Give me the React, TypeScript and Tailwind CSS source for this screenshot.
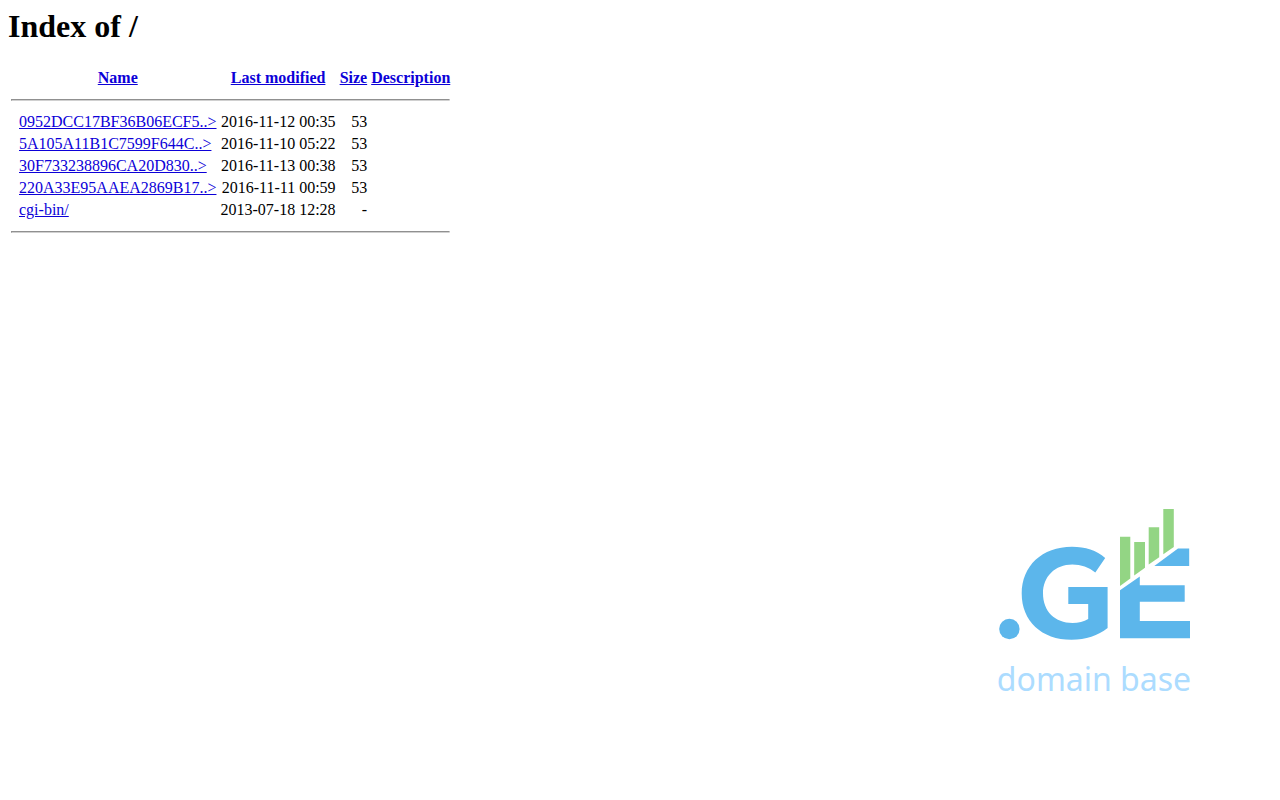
const columns = ['Name', 'Last modified', 'Size', 'Description'];

const entries = [
  { name: '0952DCC17BF36B06ECF5..>', modified: '2016-11-12 00:35', size: '53' },
  { name: '5A105A11B1C7599F644C..>', modified: '2016-11-10 05:22', size: '53' },
  { name: '30F733238896CA20D830..>', modified: '2016-11-13 00:38', size: '53' },
  { name: '220A33E95AAEA2869B17..>', modified: '2016-11-11 00:59', size: '53' },
  { name: 'cgi-bin/', modified: '2013-07-18 12:28', size: '-' },
];

function Rule() {
  return (
    <tr>
      <td colSpan={5} className="p-px">
        <hr className="my-2 h-0 border border-t-[#909090] border-r-[#eeeeee] border-b-[#d0d0d0] border-l-[#909090]" />
      </td>
    </tr>
  );
}

function Logo() {
  return (
    <div className="flex flex-col items-center">
      <svg width="196" height="132" viewBox="996 508 196 132" aria-hidden="true">
        <g fill="#5cb6eb">
          <circle cx="1009.4" cy="629" r="10.2" />
          <path d="M1105.2 558 L1095.3 572.4 C1089 567.2 1081 564.4 1072.3 564.4 C1055 564.4 1043 576.5 1043 593.3 C1043 611.5 1055 623 1072.5 623 C1078.5 623 1083.8 621.8 1088.2 619 V604 H1068.3 V587 H1107.6 V628 C1098 635.7 1086 639.8 1071.5 639.8 C1041.5 639.8 1021.7 621 1021.7 593.5 C1021.7 566 1042 546.7 1072 546.7 C1085.5 546.7 1096.5 550.3 1105.2 558 Z" />
          <path d="M1120 590.3 L1139.8 576.5 V585.3 H1184.7 V601.8 H1139.8 V621 H1190 V638.2 H1120 Z" />
          <path d="M1154.3 566 L1178 548.5 H1189.2 V566 Z" />
        </g>
        <g fill="#93d584">
          <path d="M1120 536.8 H1130.3 V578.6 L1120 586 Z" />
          <path d="M1134.2 542 H1145 V567.8 L1134.2 575.5 Z" />
          <path d="M1148.7 527.2 H1159.2 V557.3 L1148.7 564.4 Z" />
          <path d="M1163.3 509 H1173.8 V546.9 L1163.3 554.3 Z" />
        </g>
      </svg>
      <p className="mt-4 font-['Noto_Sans',sans-serif] text-[32px] leading-[46px] text-[#acdcff]">domain base</p>
    </div>
  );
}

export default function App() {
  return (
    <div className="flex min-h-screen flex-col bg-white font-['Liberation_Serif',serif] text-base leading-[18px] text-black">
      <main className="p-2">
        <h1 className="mb-[21px] text-[32px] leading-[37px] font-bold">Index of /</h1>
        <table className="border-separate border-spacing-[2px]">
          <thead>
            <tr>
              <th className="p-px font-normal">&nbsp;</th>
              {columns.map((column) => (
                <th key={column} className="p-px text-center font-bold">
                  <a href="#" className="text-[#0c00d8] underline">{column}</a>
                </th>
              ))}
            </tr>
          </thead>
          <tbody>
            <Rule />
            {entries.map((entry) => (
              <tr key={entry.name}>
                <td className="p-px">&nbsp;</td>
                <td className="p-px">
                  <a href="#" className="text-[#0c00d8] underline">{entry.name}</a>
                </td>
                <td className="p-px text-right whitespace-nowrap">{entry.modified}</td>
                <td className="p-px text-right">{entry.size}</td>
                <td className="p-px">&nbsp;</td>
              </tr>
            ))}
            <Rule />
          </tbody>
        </table>
      </main>

      <footer className="mt-auto mr-[88px] mb-[98px] self-end">
        <Logo />
      </footer>
    </div>
  );
}
